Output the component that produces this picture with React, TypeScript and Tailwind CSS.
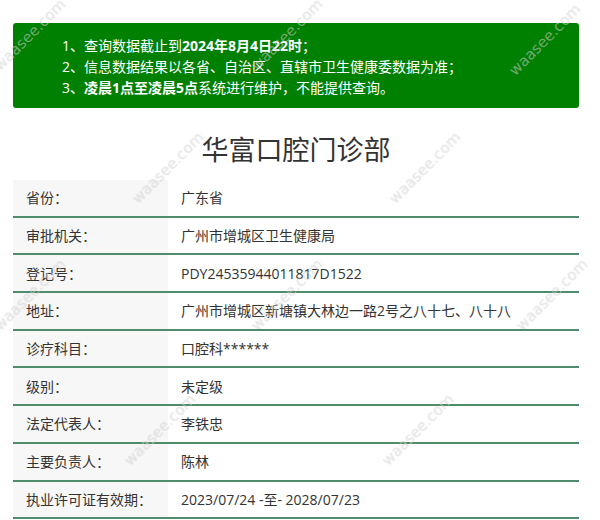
import React from 'react';

const rows = [
  { label: '省份：', value: '广东省' },
  { label: '审批机关：', value: '广州市增城区卫生健康局' },
  { label: '登记号：', value: 'PDY24535944011817D1522' },
  { label: '地址：', value: '广州市增城区新塘镇大林边一路2号之八十七、八十八' },
  { label: '诊疗科目：', value: '口腔科******' },
  { label: '级别：', value: '未定级' },
  { label: '法定代表人：', value: '李铁忠' },
  { label: '主要负责人：', value: '陈林' },
  { label: '执业许可证有效期：', value: '2023/07/24 -至- 2028/07/23' },
];

// watermark centers, staggered tiling
const marks = [
  [30, 35], [287, 35], [545, 40],
  [168, 168], [425, 168],
  [30, 295], [287, 295], [552, 295],
  [160, 430], [418, 430],
];

const App: React.FC = () => {
  return (
    <div className="relative w-[600px] h-[520px] overflow-hidden bg-white font-['Open_Sans','Noto_Sans_CJK_SC',sans-serif] text-[#333]">
      <div className="ml-[13px] w-[566px] pt-[23px]">
        <div className="rounded-[3px] bg-[#008000] pl-[49px] pt-[12px] pb-[10px] text-[14px] leading-[21px] text-white">
          <p>
            1、查询数据截止到<b className="font-bold">2024年8月4日22时</b>；
          </p>
          <p>2、信息数据结果以各省、自治区、直辖市卫生健康委数据为准；</p>
          <p>
            3、<b className="font-bold">凌晨1点至凌晨5点</b>系统进行维护，不能提供查询。
          </p>
        </div>

        <h1 className="mt-[22px] mb-[10px] text-center text-[27px] leading-[40px] font-normal text-[#333]">
          华富口腔门诊部
        </h1>

        <div className="flex flex-col">
          {rows.map((r) => (
            <div key={r.label} className="flex h-[37.7px] border-b-2 border-[#4f8c6c] text-[14px]">
              <div className="flex w-[155px] items-center bg-[#f7f7f7] pl-[13px]">{r.label}</div>
              <div className="flex flex-1 items-center pl-[13px]">{r.value}</div>
            </div>
          ))}
        </div>
      </div>

      {marks.map(([x, y], i) => (
        <span
          key={i}
          className="pointer-events-none absolute -translate-x-1/2 -translate-y-1/2 -rotate-45 whitespace-nowrap font-['DejaVu_Sans',sans-serif] text-[15px] text-white/45 [text-shadow:0_0_1px_rgba(0,0,0,0.18)]"
          style={{ left: x, top: y }}
        >
          waasee.com
        </span>
      ))}
    </div>
  );
};

export default App;
